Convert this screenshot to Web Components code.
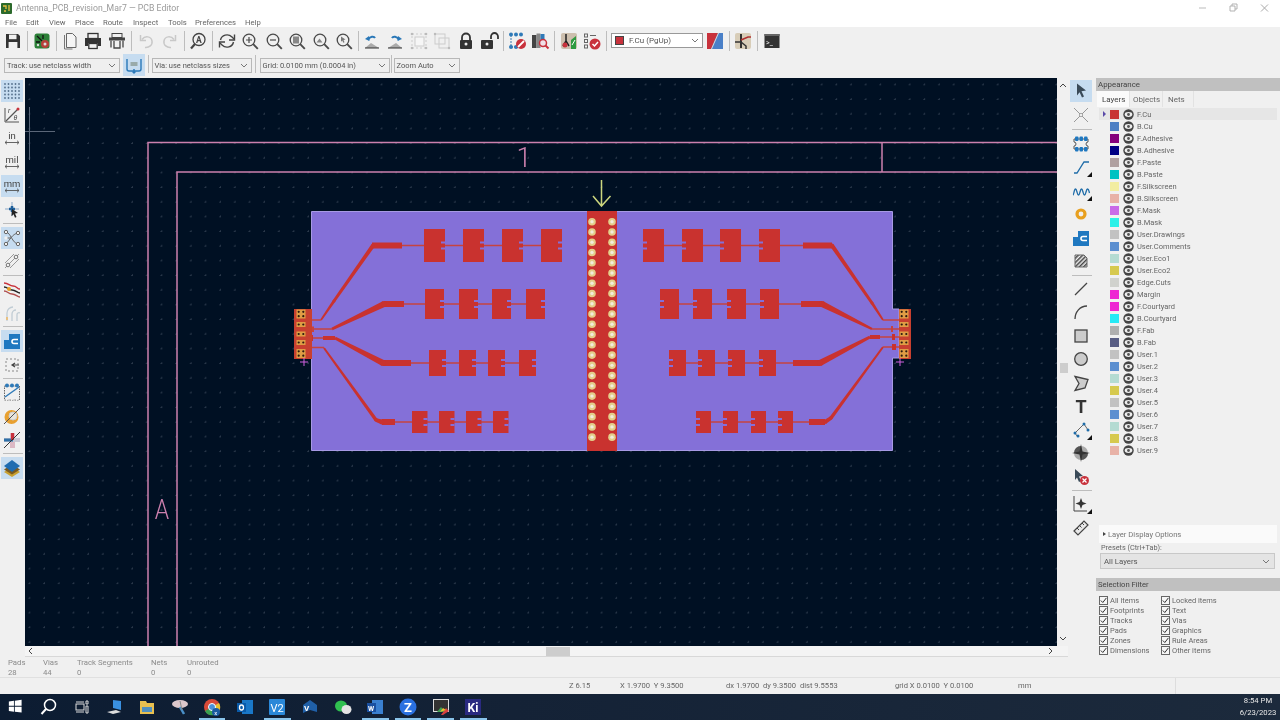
<!DOCTYPE html>
<html><head><meta charset="utf-8"><title>PCB Editor</title>
<style>
html,body{margin:0;padding:0;width:1280px;height:720px;overflow:hidden;background:#f0f0f0}
body{display:flex;flex-direction:column;font-family:Roboto,"Open Sans",sans-serif;font-size:7.6px;color:#555;filter:blur(.35px)}
.main{display:flex;height:579px}
</style></head>
<body>
<title-bar></title-bar>
<menu-bar></menu-bar>
<tool-strip style="height:27px;padding-left:1px;--w:23.5px;--h:26px">
<tool-btn icon="save"></tool-btn><tool-sep w="6"></tool-sep><tool-btn icon="pcb"></tool-btn><tool-sep w="4"></tool-sep>
<tool-btn icon="page"></tool-btn><tool-btn icon="print"></tool-btn><tool-btn icon="plot"></tool-btn><tool-sep w="6"></tool-sep>
<tool-btn icon="undo"></tool-btn><tool-btn icon="redo"></tool-btn><tool-sep w="5"></tool-sep>
<tool-btn icon="find"></tool-btn><tool-sep w="5"></tool-sep>
<tool-btn icon="refresh"></tool-btn><tool-btn icon="zin"></tool-btn><tool-btn icon="zout"></tool-btn><tool-btn icon="zfit"></tool-btn><tool-btn icon="zobj"></tool-btn><tool-btn icon="zsel"></tool-btn><tool-sep w="4"></tool-sep>
<tool-btn icon="rotl"></tool-btn><tool-btn icon="rotr"></tool-btn><tool-btn icon="group"></tool-btn><tool-btn icon="ungroup"></tool-btn><tool-btn icon="lock"></tool-btn><tool-btn icon="unlock"></tool-btn><tool-sep w="4"></tool-sep>
<tool-btn icon="netlist"></tool-btn><tool-btn icon="inspect"></tool-btn><tool-sep w="5"></tool-sep>
<tool-btn icon="script"></tool-btn><tool-btn icon="drc"></tool-btn><tool-sep w="5"></tool-sep>
<layer-box>F.Cu (PgUp)</layer-box>
<tool-btn icon="pair"></tool-btn><tool-sep w="5"></tool-sep><tool-btn icon="sch"></tool-btn><tool-sep w="5"></tool-sep><tool-btn icon="term"></tool-btn>
</tool-strip>
<tool-strip style="height:24px;padding-left:4px;--w:23px;--h:22px;align-items:flex-start">
<k-select style="width:116px">Track: use netclass width</k-select>
<tool-btn icon="autowidth" active style="margin-left:2.5px"></tool-btn>
<tool-sep w="6" short></tool-sep>
<k-select style="width:100px">Via: use netclass sizes</k-select>
<tool-sep w="8" short></tool-sep>
<k-select style="width:130px">Grid: 0.0100 mm (0.0004 in)</k-select>
<tool-sep w="4" short></tool-sep>
<k-select style="width:66px">Zoom Auto</k-select>
</tool-strip>
<div class="main">
<tool-strip vertical style="width:25px;padding-top:1px;--w:24px;--h:23.8px">
<tool-btn icon="grid" active></tool-btn><tool-btn icon="polar"></tool-btn><tool-btn icon="inch"></tool-btn><tool-btn icon="mil"></tool-btn><tool-btn icon="mm" active></tool-btn><tool-btn icon="cross"></tool-btn><tool-sep></tool-sep>
<tool-btn icon="rats" active></tool-btn><tool-btn icon="rats2"></tool-btn><tool-sep></tool-sep>
<tool-btn icon="hl"></tool-btn><tool-btn icon="viasoff"></tool-btn><tool-sep></tool-sep>
<tool-btn icon="zone" active></tool-btn><tool-btn icon="dash"></tool-btn><tool-sep></tool-sep>
<tool-btn icon="netinsp"></tool-btn><tool-btn icon="padfill"></tool-btn><tool-btn icon="crossred"></tool-btn><tool-sep></tool-sep>
<tool-btn icon="layers" active></tool-btn>
</tool-strip>
<board-view></board-view>
<tool-strip vertical style="width:26px;margin:0 1px;padding-top:1px;--w:24px;--h:23.5px">
<tool-btn icon="arrow" active style="--h:24px"></tool-btn><tool-btn icon="xcross" style="--h:24px"></tool-btn><tool-sep h="5"></tool-sep>
<tool-btn icon="fp"></tool-btn><tool-btn icon="route"></tool-btn><tool-btn icon="tune"></tool-btn><tool-btn icon="via"></tool-btn><tool-btn icon="zone"></tool-btn><tool-btn icon="hatch"></tool-btn><tool-sep></tool-sep>
<tool-btn icon="line"></tool-btn><tool-btn icon="arc"></tool-btn><tool-btn icon="rect"></tool-btn><tool-btn icon="circle"></tool-btn><tool-btn icon="poly"></tool-btn><tool-btn icon="text"></tool-btn><tool-btn icon="dim"></tool-btn><tool-btn icon="anchor"></tool-btn><tool-btn icon="del"></tool-btn><tool-sep></tool-sep>
<tool-btn icon="origin"></tool-btn><tool-btn icon="ruler"></tool-btn>
</tool-strip>
<side-dock></side-dock>
</div>
<msg-panel></msg-panel>
<status-bar></status-bar>
<task-bar></task-bar>
<script>
const G='#4a4a4a';
const mag=(inner='')=>`<circle cx="8" cy="8" r="5.800" fill="none" stroke="${G}" stroke-width="1.300"/><path d="M12.200 12.200l4.600 4.600" stroke="${G}" stroke-width="1.900"/>${inner}`;
const dots=(pts,c,r=1.500)=>pts.map(p=>`<circle cx="${p[0]}" cy="${p[1]}" r="${r}" fill="${c}"/>`).join('');
const gridDots=()=>{let s='';for(let y=2;y<17;y+=3.500)for(let x=2;x<17;x+=3.500)s+=`<circle cx="${x}" cy="${y}" r=".9" fill="#55708c"/>`;return s};
const corner='<path d="M20 14v5h-5z" fill="#111"/>';
const t=(x,y,s,size,c='#444',extra='')=>`<text x="${x}" y="${y}" font-family="Roboto,sans-serif" font-size="${size}" fill="${c}" ${extra}>${s}</text>`;
const unit=(s,size=8.500)=>t(9,10,s,size,'#444','text-anchor="middle"')+`<path d="M2 13.500h14M4 11.700l-2 1.800 2 1.800M14 11.700l2 1.800-2 1.800" fill="none" stroke="#555" stroke-width=".9"/>`;
const ICONS={
save:`<path d="M2 2h12l2 2v12H2z" fill="#333"/><rect x="5" y="2.600" width="7.500" height="4.600" fill="#f0f0f0"/><rect x="4.600" y="10" width="8.800" height="6" fill="#f0f0f0"/>`,
pcb:`<rect x="1.500" y="1.500" width="15" height="15" rx="2.500" fill="#2c8038"/><path d="M4 4l5 5M10 3v4M3 10h4" stroke="#111" stroke-width="1.300"/><circle cx="12" cy="12" r="4" fill="#b8403a"/><circle cx="12" cy="12" r="1.500" fill="#ddd"/><circle cx="5" cy="13" r="1.200" fill="#ddd"/>`,
page:`<path d="M3.500 3v14h8" fill="none" stroke="#777"/><path d="M5.500 1.500h6l3.500 3.500v10.500H5.500z" fill="#f5f5f5" stroke="#666"/>`,
print:`<rect x="4" y="1.500" width="10" height="5" fill="#f0f0f0" stroke="#333" stroke-width="1.300"/><path d="M1 6h16v8h-3v-3H4v3H1z" fill="#333"/><rect x="4.800" y="11.500" width="8.400" height="5" fill="#f0f0f0" stroke="#333" stroke-width="1.300"/>`,
plot:`<rect x="4" y="1.500" width="10" height="4" fill="none" stroke="#444"/><path d="M1 5.500h16v3H1z" fill="#444"/><path d="M3 8.500v7M15 8.500v7M6 9v7h6V9" fill="none" stroke="#444" stroke-width="1.300"/>`,
undo:`<path d="M5 7.500c3-4 9-3.500 10 1.500 .8 4-3 7-7 6.500" fill="none" stroke="#c8c8c8" stroke-width="1.500"/><path d="M3.500 3v5.500H9" fill="none" stroke="#c8c8c8" stroke-width="1.500"/>`,
redo:`<path d="M13 7.500c-3-4-9-3.500-10 1.500-.8 4 3 7 7 6.500" fill="none" stroke="#c8c8c8" stroke-width="1.500"/><path d="M14.500 3v5.500H9" fill="none" stroke="#c8c8c8" stroke-width="1.500"/>`,
find:`<circle cx="10" cy="7.500" r="6" fill="none" stroke="#444" stroke-width="1.300"/><path d="M6 12l-4 4.500" stroke="#444" stroke-width="2.200"/>${t(7,10.500,'A',8.500,'#444','font-weight="700"')}`,
refresh:`<path d="M2.500 8C3.500 3 10 1 14 5l2 2" fill="none" stroke="#444" stroke-width="1.400"/><path d="M16.500 2.500V8H11" fill="none" stroke="#444" stroke-width="1.400"/><path d="M15.500 10C14.500 15 8 17 4 13l-2-2" fill="none" stroke="#444" stroke-width="1.400"/><path d="M1.500 15.500V10H7" fill="none" stroke="#444" stroke-width="1.400"/>`,
zin:mag(`<path d="M5 8h6M8 5v6" stroke="${G}" stroke-width="1.200"/>`),
zout:mag(`<path d="M5 8h6" stroke="${G}" stroke-width="1.200"/>`),
zfit:mag(`<rect x="5" y="4.500" width="6" height="7" fill="#888"/>`),
zobj:mag(`<path d="M4.500 10.500l3-4 3 4z" fill="#888"/>`),
zsel:mag(`<path d="M6 4.500l4.500 3-2 .6 1 2.200-1.200.5-1-2.200-1.300 1.200z" fill="#777"/>`),
rotl:`<path d="M2 16l6-5 8 5z" fill="#aaa"/><path d="M2 16h14" stroke="#333"/><path d="M5 8C7 4 11 4 12 6" fill="none" stroke="#2a78b8" stroke-width="2"/><path d="M2 7l4-3 .5 5z" fill="#2a78b8"/>`,
rotr:`<path d="M16 16l-6-5-8 5z" fill="#aaa"/><path d="M2 16h14" stroke="#333"/><path d="M13 8C11 4 7 4 6 6" fill="none" stroke="#2a78b8" stroke-width="2"/><path d="M16 7l-4-3-.5 5z" fill="#2a78b8"/>`,
group:`<rect x="2" y="2" width="14" height="14" fill="none" stroke="#ccc" stroke-dasharray="2 2"/><rect x="5" y="5" width="9" height="9" fill="#f6f6f6" stroke="#ccc"/>${dots([[2,2],[16,2],[2,16],[16,16]],'#bbb',1.300)}`,
ungroup:`<rect x="2" y="2" width="10" height="10" fill="none" stroke="#ccc"/><rect x="6" y="6" width="10" height="10" fill="none" stroke="#ccc"/>${dots([[2,2],[16,16]],'#bbb',1.200)}`,
lock:`<path d="M5 8V5.500a4 4 0 0 1 8 0V8" fill="none" stroke="#333" stroke-width="1.800"/><rect x="3" y="8" width="12" height="9" rx="1" fill="#333"/><circle cx="9" cy="12" r="1.500" fill="#eee"/>`,
unlock:`<path d="M11 7V4.500a3.500 3.500 0 0 1 7 0V7" fill="none" stroke="#333" stroke-width="1.800"/><rect x="1" y="8" width="12" height="9" rx="1" fill="#333"/><circle cx="7" cy="12" r="1.500" fill="#eee"/>`,
netlist:`<path d="M3 3v12h12" fill="none" stroke="#3a78b0" stroke-dasharray="2 1"/>${dots([[3,2.500],[8,2.500],[13,2.500],[3,15],[8,15]],'#2f7ab8',2)}<circle cx="13" cy="12" r="5" fill="#c8323c"/><path d="M10 15l6-6" stroke="#fff" stroke-width="1.800"/>`,
inspect:`<rect x="1" y="3" width="4.500" height="13" fill="#444"/><rect x="5.500" y="1.500" width="4" height="14.500" fill="#888"/><rect x="9.500" y="2" width="4" height="10" fill="#2f7ab8"/><circle cx="12" cy="11" r="3.500" fill="#f0e0e8" stroke="#c8323c" stroke-width="1.500"/><path d="M14.500 13.500l3 3" stroke="#c8323c" stroke-width="2"/>`,
script:`<rect x="1" y="1" width="16" height="16" rx="2" fill="#cdbfae"/><path d="M11 17V8l5-4v13z" fill="#2e9a40"/><path d="M6 2v7l-3 5M6 9l3 5" fill="none" stroke="#222" stroke-width="1.500"/><circle cx="5" cy="13" r="2.500" fill="#c8323c"/><path d="M12 13l3-5" stroke="#fff"/>`,
drc:`<rect x="1.500" y="2" width="3" height="3" fill="none" stroke="#666"/><rect x="1.500" y="7.500" width="3" height="3" fill="none" stroke="#666"/><rect x="1.500" y="13" width="3" height="3" fill="none" stroke="#666"/><path d="M7 3.500h6" stroke="#666"/><circle cx="12" cy="12" r="5.500" fill="#c8323c"/><path d="M9.500 12l2 2 3.500-4" fill="none" stroke="#fff" stroke-width="1.500"/>`,
pair:`<path d="M1 1h16v16H1z" fill="#4a80c8"/><path d="M1 1h11L5 17H1z" fill="#c8323c"/><path d="M5 17l7-16h1L6 17z" fill="#ddd"/>`,
sch:`<rect x="1" y="1" width="16" height="16" rx="2" fill="#d8cdb8"/><path d="M7 2v14" stroke="#222" stroke-width="1.800"/><path d="M7 8l7-3h3" stroke="#b03030" stroke-width="1.600" fill="none"/><path d="M1 10h6M7 10l5 4v3" stroke="#333" stroke-width="1.500" fill="none"/>`,
term:`<rect x="1.500" y="2" width="15" height="14" fill="#333"/><rect x="1.500" y="2" width="15" height="2" fill="#666"/>${t(3,12.500,'&gt;_',7,'#eee')}`,
autowidth:`<path d="M3 3v10a2 2 0 0 0 2 2h10a2 2 0 0 0 2-2V3" fill="none" stroke="#2a78b8" stroke-width="1.400" transform="translate(-1 0)"/><rect x="5.500" y="6" width="7" height="4" fill="#9aa"/><path d="M9 13v4" stroke="#2a78b8" stroke-width="1.500"/><path d="M6.500 15.500l2.500 2.500 2.500-2.500z" fill="#2a78b8"/>`,
grid:gridDots(),
polar:`<path d="M2 2v14h14" fill="none" stroke="#555"/><path d="M3 15L15 3" stroke="#555" stroke-width="1.200"/><circle cx="15" cy="3" r="1.500" fill="#c8323c"/>${t(5,7,'r',7,'#444','font-style="italic"')}${t(10.500,13.500,'θ',7,'#444','font-style="italic"')}`,
inch:unit('in',9.500),mil:unit('mil',9.500),mm:unit('mm',9.500),
cross:`<path d="M9 1v14M2 8h14" stroke="#8aa8c8"/><path d="M6 8h6M9 5v6" stroke="#1f5f9a" stroke-width="2.500"/><path d="M9 8l6 4-3 .5 1.500 3.500-1.500.7-1.500-3.500-2 2z" fill="#222"/>`,
rats:`<path d="M3 3c5 1 6 11 12 12M3 15c4-4 6-10 12-11M3 9l5 0" fill="none" stroke="#666"/>${dots([[3,3],[15,15],[3,15],[15,4],[3,9]],'#f0f0f0',1.700)}<g fill="none" stroke="#666">${[[3,3],[15,15],[3,15],[15,4]].map(p=>`<circle cx="${p[0]}" cy="${p[1]}" r="1.700"/>`).join('')}</g>`,
rats2:`<path d="M2 16L16 2M2 11L11 2M7 16L16 7" stroke="#999"/><circle cx="5" cy="13" r="1.800" fill="#f0f0f0" stroke="#777"/><circle cx="13" cy="5" r="1.800" fill="#f0f0f0" stroke="#777"/>`,
hl:`<path d="M1 3c5 0 5 3 9 3s4 3 7 3" fill="none" stroke="#c8323c" stroke-width="1.400"/><path d="M1 7c4 0 4 3 8 3s5 3 8 3" fill="none" stroke="#222" stroke-width="1.400"/><path d="M1 11c4 0 4 3 8 3s5 3 8 3" fill="none" stroke="#b05050" stroke-width="1.400"/><circle cx="6" cy="9" r="2" fill="#e8a020"/>`,
viasoff:`<path d="M4 17v-8a6 6 0 0 1 6-6M9 17v-7a4 4 0 0 1 4-4M14 17v-6a2 2 0 0 1 3-2" fill="none" stroke="#c0ccd4" stroke-width="1.300"/><path d="M4 13v3" stroke="#e8c080" stroke-width="2"/>`,
zone:`<path d="M1 17V8h5V2h11v15z" fill="#1f78c0"/><path d="M15 7.500h-4a2 2 0 0 0 0 4h4" fill="none" stroke="#fff" stroke-width="1.600"/>`,
dash:`<rect x="3" y="3" width="12" height="12" fill="none" stroke="#888" stroke-dasharray="2 2"/><path d="M16 9h-6M12 7l-3 2 3 2" fill="none" stroke="#444" stroke-width="1.200"/>`,
netinsp:`<rect x="1.500" y="3" width="15" height="14" fill="none" stroke="#666" stroke-dasharray="1.500 1"/>${dots([[4,2.500],[9,2.500],[14,2.500]],'#2f7ab8',2)}${dots([[4,15],[9,15],[14,15]],'#f0f0f0',2)}<path d="M2 14L16 4" stroke="#2f7ab8" stroke-width="1.500"/>`,
padfill:`<circle cx="8.500" cy="10" r="7" fill="#e8a030"/><circle cx="10" cy="9" r="4" fill="#e8e4dc" stroke="#ccc"/><path d="M1 17L17 1" stroke="#555"/>`,
crossred:`<rect x="7" y="2" width="5" height="15" fill="#dcb8c4"/><rect x="1" y="7" width="16" height="4" fill="#c8c8d4"/><rect x="1" y="7.500" width="9" height="3" fill="#2f70a8"/><rect x="8" y="2" width="3" height="7" fill="#c8323c"/><path d="M1 17L17 1" stroke="#333"/>`,
layers:`<path d="M9 8l8 5-8 5-8-5z" fill="#c8a030"/><path d="M9 5.500l8 5-8 5-8-5z" fill="#7a5a20"/><path d="M9 1l8 6-8 6-8-6z" fill="#1f6cb0"/>`,
arrow:`<path d="M5 1.500l9 7-4.500 .8 2.500 5.200-2 1-2.400-5.200L5 13.500z" fill="#3a4a58"/>`,
xcross:`<path d="M2 2l14 14M16 2L2 16" stroke="#999"/><path d="M7 9l2-2 2 2-2 2z" fill="#eee" stroke="#aaa"/>`,
fp:`<path d="M2 4h14v3a2 2 0 0 0 0 4v3H2v-3a2 2 0 0 0 0-4z" fill="#f0f0f0" stroke="#555"/><g fill="#1f78c0">${[2,6.500,11].map(x=>`<rect x="${x+1}" y="1.500" width="3.500" height="4.500" rx="1"/><rect x="${x+1}" y="12" width="3.500" height="4.500" rx="1"/>`).join('')}</g>`,
route:`<path d="M2 15h3l7-11h5" fill="none" stroke="#1f6ca8" stroke-width="1.300"/>${corner}`,
tune:`<path d="M1 13c1 0 1-6 2.500-6S5 13 6.500 13 8 7 9.500 7 11 13 12.500 13 14 7 15.500 7 17 10 17.500 11" fill="none" stroke="#1f6ca8" stroke-width="1.300"/>${corner}`,
via:`<circle cx="9" cy="9" r="4" fill="none" stroke="#e8a020" stroke-width="3.200"/>`,
hatch:`<defs><pattern id="h" width="3" height="3" patternUnits="userSpaceOnUse" patternTransform="rotate(45)"><rect width="1.500" height="3" fill="#444"/></pattern></defs><path d="M3 3h9l3 3v9H3z" fill="url(#h)" stroke="#666"/>`,
line:`<path d="M3 15L15 3" stroke="#444" stroke-width="1.200"/>`,
arc:`<path d="M3 16C3 9 8 3 15 3" fill="none" stroke="#444" stroke-width="1.300"/>`,
rect:`<rect x="3" y="3" width="12" height="12" fill="#ccc" stroke="#444" stroke-width="1.300"/>`,
circle:`<circle cx="9" cy="9" r="6.300" fill="#ccc" stroke="#444" stroke-width="1.300"/>`,
poly:`<path d="M3 2.500l13 3-3 8.500-10 2.500 4-7z" fill="#ccc" stroke="#444" stroke-width="1.300"/>`,
text:t(9,15.500,'T',18,'#333','text-anchor="middle" font-weight="700"'),
dim:`<path d="M3 12L12 3l4 6" fill="none" stroke="#666"/><path d="M3 12l2 3" stroke="#666"/>${dots([[3,12],[12,3],[16,9],[6,15]],'#1f6ca8',1.500)}${corner}`,
anchor:`<circle cx="9" cy="9" r="7" fill="#aaa"/><path d="M9 9V2A7 7 0 0 0 2 9zM9 9v7a7 7 0 0 0 7-7z" fill="#555"/><path d="M9 0l1.500 7.500L18 9l-7.500 1.500L9 18l-1.500-7.500L0 9l7.500-1.500z" fill="#333"/>`,
del:`<path d="M3 1l8 7-4 .6 2 4.400-2 1-2-4.400-2 2.400z" fill="#3a4a58"/><circle cx="12.500" cy="12.500" r="4.500" fill="#c8323c"/><path d="M10.500 10.500l4 4M14.500 10.500l-4 4" stroke="#fff" stroke-width="1.200"/>`,
origin:`<path d="M2 1v15h13" fill="none" stroke="#444"/><path d="M9 3l1.500 4 4 1.500-4 1.500-1.500 4-1.500-4-4-1.500 4-1.500z" fill="#333"/>${corner}`,
ruler:`<path d="M2 12L12 2l4 4L6 16z" fill="#e8e8e8" stroke="#444" stroke-width="1.200"/><path d="M5 9l2 2M7.500 6.500l2 2M10 4l2 2" stroke="#444"/>`
};
const sh=(el,html)=>{el.attachShadow({mode:'open'}).innerHTML=html;};
class TitleBar extends HTMLElement{connectedCallback(){sh(this,`<style>:host{display:flex;align-items:center;height:15px;background:#fff;flex:none}
.t{color:#9a9a9a;margin-left:4px;font-size:8.700px;padding-top:1px}.ic{margin-left:1px;margin-top:2px}
.w{margin-left:auto;display:flex;width:90px}.w svg{width:30px;height:10px}</style>
<svg class="ic" width="11" height="11" viewBox="0 0 11 11"><rect width="11" height="11" rx="1" fill="#2c6a2c"/><path d="M2 3h3v3M8 2v6M3 8h2" stroke="#e8c040" stroke-width="1.300" fill="none"/></svg>
<span class="t">Antenna_PCB_revision_Mar7 — PCB Editor</span>
<div class="w"><svg viewBox="0 0 30 10"><path d="M9 5h7" stroke="#bbb"/></svg><svg viewBox="0 0 30 10"><path d="M10 3h5v5h-5zM12 3V1h5v5h-2" fill="none" stroke="#aaa" stroke-width=".9"/></svg><svg viewBox="0 0 30 10"><path d="M11 1.500l7 7M18 1.500l-7 7" stroke="#aaa"/></svg></div>`)}}
customElements.define('title-bar',TitleBar);
class MenuBar extends HTMLElement{connectedCallback(){
const M=[['File',21],['Edit',23],['View',26],['Place',28],['Route',30],['Inspect',35],['Tools',27],['Preferences',50],['Help',30]];
sh(this,`<style>:host{display:flex;align-items:center;box-sizing:border-box;height:12px;background:#fff;padding:2px 0 0 5px;font-size:7.700px;color:#666;flex:none}span{flex:none}</style>`+
M.map(m=>`<span style="width:${m[1]}px">${m[0]}</span>`).join(''))}}
customElements.define('menu-bar',MenuBar);
class ToolStrip extends HTMLElement{connectedCallback(){sh(this,`<style>:host{display:flex;align-items:center;background:#f0f0f0;box-sizing:border-box;flex:none}
:host([vertical]){flex-direction:column;align-items:stretch}</style><slot></slot>`)}}
customElements.define('tool-strip',ToolStrip);
class ToolBtn extends HTMLElement{connectedCallback(){sh(this,`<style>:host{display:flex;align-items:center;justify-content:center;flex:none;width:var(--w);height:var(--h)}
.b{display:flex;align-items:center;justify-content:center;width:22px;height:22px;flex:none}
:host([active]) .b{background:#c6dcf0}svg{width:18px;height:18px;overflow:visible}</style>
<div class="b"><svg viewBox="0 0 18 18">${ICONS[this.getAttribute('icon')]||''}</svg></div>`)}}
customElements.define('tool-btn',ToolBtn);
class ToolSep extends HTMLElement{connectedCallback(){const w=this.getAttribute('w'),h=this.getAttribute('h')||4;
sh(this,`<style>:host{display:flex;flex:none;align-items:center;justify-content:center}
.l{background:#bdbdbd}</style><div class="l"></div>`);
const l=this.shadowRoot.querySelector('.l');
if(w){this.style.width=w+'px';this.style.height=this.hasAttribute('short')?'20px':'100%';l.style.cssText='width:1px;height:'+(this.hasAttribute('short')?'18px':'20px');}
else{this.style.height=h+'px';l.style.cssText='height:1px;width:20px';}}}
customElements.define('tool-sep',ToolSep);
const chev=`<svg width="8" height="5" viewBox="0 0 8 5"><path d="M1 1l3 3 3-3" fill="none" stroke="#777"/></svg>`;
class KSelect extends HTMLElement{connectedCallback(){sh(this,`<style>:host{display:flex;align-items:center;justify-content:space-between;flex:none;box-sizing:border-box;height:15px;margin-top:4px;padding:0 3px 0 2px;background:#efefef;border:1px solid #b8b8b8;font-size:7.500px;color:#555;white-space:nowrap}</style><slot></slot>${chev}`)}}
customElements.define('k-select',KSelect);
class LayerBox extends HTMLElement{connectedCallback(){sh(this,`<style>:host{display:flex;align-items:center;flex:none;box-sizing:border-box;width:92px;height:15px;margin-left:2px;padding:0 3px;background:#fff;border:1px solid #999;font-size:8px;color:#555}
i{width:9px;height:9px;background:#c8323c;border:1px solid #444;box-sizing:border-box;margin-right:5px}svg{margin-left:auto}</style><i></i><slot></slot>${chev}`)}}
customElements.define('layer-box',LayerBox);

class BoardView extends HTMLElement{connectedCallback(){
const RED='#c9322f',TH='#c6433f',PUR='#8470d8';
const rect=(x,y,w,h,c)=>`<rect x="${x}" y="${y}" width="${w}" height="${h}" fill="${c}"/>`;
const ln=(x1,y1,x2,y2,w=1.500,c=TH)=>`<path d="M${x1} ${y1}L${x2} ${y2}" stroke="${c}" stroke-width="${w}"/>`;
const taper=(x1,y1,w1,x2,y2,w2)=>{const dx=x2-x1,dy=y2-y1,l=Math.hypot(dx,dy),nx=-dy/l/2,ny=dx/l/2;
return `<polygon fill="${RED}" points="${x1+nx*w1},${y1+ny*w1} ${x2+nx*w2},${y2+ny*w2} ${x2-nx*w2},${y2-ny*w2} ${x1-nx*w1},${y1-ny*w1}"/><circle cx="${x1}" cy="${y1}" r="${w1/2}" fill="${RED}"/>`};
const patches=(xs,w,yc,h,side)=>{let s='';const a=xs[0],b=xs[xs.length-1]+w;
s+=ln(a,yc,b,yc);
xs.forEach(x=>{s+=rect(x,yc-h/2,w,h,RED);const nx=side<0?x+w-4:x;s+=rect(nx,yc-4,4,2,PUR)+rect(nx,yc+2,4,2,PUR);});return s};
const feed=(thinA,thinB,yc,tA,tB)=>ln(thinA,yc,thinB,yc)+ln(tA,yc,tB,yc,6,RED);
let b='';
b+=`<path d="M311.500 211.500H892.500V309H899V358H892.500V450.500H311.500Z" fill="${PUR}" stroke="#a79ae4" stroke-width="1"/>`;
b+=rect(587,211,30,240,RED);
for(let i=0;i<22;i++){const y=221.700+i*10.260;for(const x of[592,612])b+=`<circle cx="${x}" cy="${y}" r="3.800" fill="#e3cf8a"/><circle cx="${x}" cy="${y}" r="1.700" fill="#f2ecdc"/>`;}
b+=patches([424,463,502,541],21,245.500,33,-1)+feed(402,424,245.500,372,402);
b+=taper(373,245.500,4,334,301,3)+taper(334,301,3,321,320,1.800);b+=ln(321,320,297,320);
b+=patches([425,459,492,526],19,304,30,-1)+feed(404,425,304,384,404);
b+=taper(384,304,6,332,329,2.500)+ln(332,329,297,329);b+=ln(313,326.500,313,332,2);
b+=patches([429,459,488,519],17,363,26,-1)+feed(411,429,363,383,411);
b+=taper(383,363,6,335,338,3)+ln(335,338,323,338,4,RED)+ln(323,338,297,338)+rect(310,335,3,6,RED);
b+=patches([412,439,466,493],15.500,422,22,-1)+feed(395,412,422,382,395);
b+=taper(382,422,5,376,420,3.500)+taper(376,420,3.500,324,348,2)+ln(324,347.500,297,347.500)+rect(307,344.500,5,6,RED);
b+=patches([643,682,720,759],21,245.500,33,1)+feed(780,803,245.500,803,832);
b+=taper(832,245.500,4,872,303,3)+taper(872,303,3,883,320,1.800)+ln(883,320,899,320);
b+=patches([660,693,727,760],19,304,30,1)+feed(779,801,304,801,822);
b+=taper(822,304,6,872,329,2.500)+ln(872,329,899,329)+ln(892,326,892,332,2);
b+=patches([669,698,728,759],17,363,26,1)+feed(776,793,363,793,820);
b+=taper(820,363,6,870,337,3)+ln(870,337,880,337,4,RED)+ln(880,337,899,337)+rect(892,334,3,6,RED);
b+=patches([696,723,751,778],15,422,22,1)+feed(793,809,422,809,825);
b+=taper(825,422,4,831,418,3.500)+taper(831,418,3.500,883,347,2)+ln(883,347,899,347)+rect(892,344,4,6,RED);
const conn=(x0,w,cx,plusx)=>{let s=rect(x0,309,w,50,'#c8402f');
[314,353.500].forEach(y=>{s+=rect(cx-4.500,y-4.500,9,9,'#df9d45')+dots([[cx-2.300,y-2.200],[cx+2.300,y-2.200],[cx-2.300,y+2.200],[cx+2.300,y+2.200]],'#2a1a10',1.100)});
[324.500,334,342.500].forEach(y=>{s+=rect(cx-4.500,y-2.500,9,5,'#df9d45')+dots([[cx-2.300,y],[cx+2.300,y]],'#2a1a10',1.100)});
s+=`<path d="M${plusx-4} 362h8M${plusx} 358v8" stroke="#d060e0" stroke-width="1"/>`;return s};
b+=conn(294,18,301,304)+conn(899,12,904,900);
const pink='#cc80ae';
const frame=`<g stroke="${pink}" stroke-width="1.500" fill="none"><path d="M148 646V142.500H1057M177 646V172H1057M882 142.500V172"/></g>
<text x="524" y="167" text-anchor="middle" font-family="Roboto,sans-serif" font-weight="300" font-size="27" fill="${pink}">1</text>
<text x="162" y="519" text-anchor="middle" font-family="Roboto,sans-serif" font-weight="300" font-size="28" fill="${pink}" transform="translate(162 0) scale(.82 1) translate(-162 0)">A</text>`;
sh(this,`<style>:host{display:grid;grid-template-columns:1032px 11px;grid-template-rows:568px 11px;flex:none}
svg.c{display:block;grid-column:1;grid-row:1;width:1032px;height:568px;background:#001023}
.v{background:#f0f0f0;display:flex;flex-direction:column;justify-content:space-between;align-items:center;position:relative;padding:5px 0;box-sizing:border-box}
.vt{position:absolute;left:3px;top:285px;width:8px;height:10px;background:#cdcdcd}
.h{background:#f4f4f4;display:flex;justify-content:space-between;align-items:center;position:relative;padding:0 3px;box-sizing:border-box;border-bottom:1px solid #d8d8d8;grid-column:1/3}
.ht{position:absolute;left:521px;top:1px;width:24px;height:9px;background:#cdcdcd}</style>
<svg class="c" viewBox="25 78 1032 568" xmlns="http://www.w3.org/2000/svg">
<defs><pattern id="g" x="29.300" y="201.700" width="14.670" height="14.670" patternUnits="userSpaceOnUse"><rect x="-.5" y="-.5" width="1.100" height="1.100" fill="#727d8e"/><rect x="14.170" y="-.5" width="1" height="1.100" fill="#727d8e"/><rect x="-.5" y="14.170" width="1.100" height="1" fill="#727d8e"/></pattern></defs>
<rect x="25" y="78" width="1032" height="568" fill="url(#g)"/>
<path d="M25 131.500H55M29.500 107V160" stroke="#5a6678" stroke-width="1"/>
${frame}${b}
<path d="M601.500 180V206M593 196l8.500 10 9-10" fill="none" stroke="#ccd67e" stroke-width="1.500"/>
</svg>
<div class="v"><svg width="8" height="5" viewBox="0 0 8 5"><path d="M1 4l3-3 3 3" fill="none" stroke="#444"/></svg><div class="vt"></div><svg width="8" height="5" viewBox="0 0 8 5"><path d="M1 1l3 3 3-3" fill="none" stroke="#444"/></svg></div>
<div class="h"><svg width="5" height="8" viewBox="0 0 5 8"><path d="M4 1L1 4l3 3" fill="none" stroke="#444"/></svg><div class="ht"></div><svg width="5" height="8" viewBox="0 0 5 8" style="margin-right:12px"><path d="M1 1l3 3-3 3" fill="none" stroke="#444"/></svg></div>`)}}
customElements.define('board-view',BoardView);

const LAYERS=[['F.Cu','#c83434'],['B.Cu','#4d7fc4'],['F.Adhesive','#84007c'],['B.Adhesive','#000084'],['F.Paste','#b0a0a0'],['B.Paste','#00c2c2'],['F.Silkscreen','#f2eda1'],['B.Silkscreen','#e8b2a7'],['F.Mask','#c96ae8'],['B.Mask','#2bf0e8'],['User.Drawings','#c2c2c2'],['User.Comments','#5c8fd0'],['User.Eco1','#b4dbd2'],['User.Eco2','#d6c94e'],['Edge.Cuts','#d0d2cd'],['Margin','#ee26d2'],['F.Courtyard','#ee26d2'],['B.Courtyard','#26e9f5'],['F.Fab','#afafaf'],['B.Fab','#585d84'],['User.1','#c2c2c2'],['User.2','#5c8fd0'],['User.3','#b4dbd2'],['User.4','#d6c94e'],['User.5','#c2c2c2'],['User.6','#5c8fd0'],['User.7','#b4dbd2'],['User.8','#d6c94e'],['User.9','#e8b2a7']];
const eye=`<svg width="11" height="11" viewBox="0 0 11 11"><circle cx="5.500" cy="5.500" r="5.200" fill="#444"/><ellipse cx="5.500" cy="5.500" rx="3.800" ry="2.400" fill="#eee"/><circle cx="5.500" cy="5.500" r="1.400" fill="#555"/></svg>`;
class SideDock extends HTMLElement{connectedCallback(){
const L=['All items','Footprints','Tracks','Pads','Zones','Dimensions'],R=['Locked items','Text','Vias','Graphics','Rule Areas','Other items'];
const ck=s=>`<label><svg width="9" height="9" viewBox="0 0 9 9"><rect x=".5" y=".5" width="8" height="8" fill="#f6f6f6" stroke="#666"/><path d="M1.800 4.500l2 2 3.600-4.600" fill="none" stroke="#333"/></svg>${s}</label>`;
sh(this,`<style>:host{display:flex;flex-direction:column;width:184px;flex:none;font-size:7.500px;color:#555;box-sizing:border-box}
.hd{height:13px;background:#c0c0c0;display:flex;align-items:center;padding-left:2px;font-size:7.900px;color:#444;flex:none}
.tabs{display:flex;height:16px;flex:none;margin-left:1px}.tabs span{box-sizing:border-box;display:flex;align-items:center;border-right:1px solid #e2e2e2;font-size:8px;color:#666}
.tabs span.a{background:#fafafa;color:#444}
.list{height:418px;box-sizing:border-box;flex:none;padding:1px 3px 0 3px}
.row{display:flex;align-items:center;height:12px;padding-left:11px;font-size:7.500px;color:#666}.row.s{background:#e6e6e6;position:relative}
.row i{width:9px;height:9px;margin-right:4px;flex:none}.row svg{margin-right:3px;flex:none}
.tri{position:absolute;left:4px;top:3px;width:0;height:0;border-left:3.500px solid #5a4aa8;border-top:3px solid transparent;border-bottom:3px solid transparent}
.opt{height:18px;background:#fafafa;display:flex;align-items:center;padding-left:4px;margin:0 3px;flex:none;color:#777;font-size:7.650px}
.opt:before{content:"";border-left:3px solid #444;border-top:2.500px solid transparent;border-bottom:2.500px solid transparent;margin-right:2px}
.pre{height:35px;flex:none;padding:0 4px 0 5px;font-size:7.300px;color:#666;box-sizing:border-box}
.pre .dd{display:flex;justify-content:space-between;align-items:center;height:16px;margin-left:-1px;padding:0 4px 0 3px;width:175px;box-sizing:border-box;background:#e4e4e4;border:1px solid #c8c8c8;color:#555;font-size:7.800px}
.pre p{margin:0;height:10px;line-height:10px}
.sf{display:flex;padding:4px 0 0 3px;background:#f0f0f0;flex:1}.col{display:flex;flex-direction:column;width:62px}
label{display:flex;align-items:center;height:10px;gap:2px;color:#666;font-size:7.500px;white-space:nowrap}</style>
<div class="hd">Appearance</div>
<div class="tabs"><span class="a" style="width:33px;padding-left:5px">Layers</span><span style="width:33px;padding-left:3px">Objects</span><span style="width:31px;padding-left:5px">Nets</span></div>
<div class="list">${LAYERS.map((l,i)=>`<div class="row ${i?'':'s'}">${i?'':'<b class="tri"></b>'}<i style="background:${l[1]}"></i>${eye}<span>${l[0]}</span></div>`).join('')}</div>
<div class="opt">Layer Display Options</div>
<div class="pre"><p>Presets (Ctrl+Tab):</p><div class="dd">All Layers${chev}</div></div>
<div class="hd" style="font-size:7.700px">Selection Filter</div>
<div class="sf"><div class="col">${L.map(ck).join('')}</div><div class="col">${R.map(ck).join('')}</div></div>`)}}
customElements.define('side-dock',SideDock);
class MsgPanel extends HTMLElement{connectedCallback(){
const C=[['Pads','28',35],['Vias','44',34],['Track Segments','0',74],['Nets','0',36],['Unrouted','0',60]];
sh(this,`<style>:host{display:flex;height:21px;box-sizing:border-box;padding:1px 0 0 8px;background:#f0f0f0;border-bottom:1px solid #e0e0e0;font-size:7.750px;color:#8a8a8a;flex:none}
div{display:flex;flex-direction:column;line-height:10px}</style>`+C.map(c=>`<div style="width:${c[2]}px"><span>${c[0]}</span><span>${c[1]}</span></div>`).join(''))}}
customElements.define('msg-panel',MsgPanel);
class StatusBar extends HTMLElement{connectedCallback(){
const C=[['Z 6.15',51],['X 1.9700  Y 9.3500',106],['dx 1.9700  dy 9.3500  dist 9.5553',169],['grid X 0.0100  Y 0.0100',123],['mm',157]];
sh(this,`<style>:host{display:flex;align-items:center;box-sizing:border-box;height:16px;padding:0 0 1px 569px;background:#f0f0f0;font-size:7.600px;color:#666;flex:none;white-space:pre}
span{flex:none}.e{border-left:1px solid #ddd;height:16px;flex:none}</style>`+C.map(c=>`<span style="width:${c[1]}px">${c[0]}</span>`).join('')+`<div class="e"></div>`)}}
customElements.define('status-bar',StatusBar);
const TASK=[
`<path d="M1 3l6-1v6H1zM8 2l8-1v7H8zM1 9h6v6l-6-1zM8 9h8v7l-8-1z" fill="#fff" transform="translate(1 1) scale(.85)"/>`,
`<circle cx="10" cy="7" r="5.500" fill="none" stroke="#fff" stroke-width="1.500"/><path d="M6 11l-4.500 5" stroke="#fff" stroke-width="2"/>`,
`<path d="M3 4h8M3 14h8M13 3h2v3h-2zM13 8h2v7h-2z" stroke="#ddd" fill="none"/><rect x="3" y="6" width="8" height="6" fill="none" stroke="#ddd"/>`,
`<path d="M8 2l8 1v9l-8-2z" fill="#3a90e0"/><path d="M2 14l9-2 5 2-8 2z" fill="#ddd"/>`,
`<path d="M2 3h6l1 2h7v11H2z" fill="#e8c050"/><rect x="4" y="9" width="10" height="5" fill="#5090c0"/>`,
`<ellipse cx="9" cy="6" rx="8" ry="4" fill="#dcc8cc"/><path d="M9 9l4 7" stroke="#4a90c8" stroke-width="2.500"/><path d="M9 3l2 9" stroke="#888"/>`,
`<circle cx="9" cy="9" r="8" fill="#d84a38"/><path d="M9 9L2 13a8 8 0 0 0 9 4z" fill="#3aa050"/><path d="M9 9l7-4a8 8 0 0 1-5 12z" fill="#e8c030"/><circle cx="9" cy="9" r="3.500" fill="#4a90d8" stroke="#fff"/><circle cx="13" cy="14" r="4" fill="#1a5aa0"/>${t(11.300,16.500,'x',6,'#fff')}`,
`<rect x="6" y="2" width="11" height="14" fill="#1a78c8"/><rect x="1" y="5" width="9" height="9" fill="#0a5aa8"/><ellipse cx="5.500" cy="9.500" rx="2" ry="2.500" fill="none" stroke="#fff" stroke-width="1.300"/>`,
`<rect x="1" y="1" width="16" height="16" rx="1" fill="#2a88d8"/>${t(9,13.500,'V2',11,'#fff','text-anchor="middle"')}`,
`<path d="M2 7l7-5 7 5v7l-7-2-7 3z" fill="#2060a8"/>${t(3,13,'V',8,'#fff','font-weight="700"')}`,
`<ellipse cx="7" cy="8" rx="6" ry="5.500" fill="#30c050"/><ellipse cx="12.500" cy="11.500" rx="5" ry="4.500" fill="#e4e4e4"/>`,
`<rect x="6" y="2" width="11" height="14" fill="#3a80d0"/><rect x="1" y="5" width="9" height="9" fill="#1a50a0"/>${t(2,12.500,'W',7,'#fff','font-weight="700"')}`,
`<circle cx="9" cy="9" r="8.500" fill="#2a70e0"/>${t(9,14,'Z',13,'#fff','text-anchor="middle" font-weight="700"')}`,
`<rect x="1.500" y="1.500" width="15" height="12" fill="#333" stroke="#ddd"/><path d="M5 14l4-5 4 5z" fill="#40a050"/><path d="M9 17l5-7 3 3-6 4z" fill="#d84040"/><path d="M8 14l3-4 3 2z" fill="#e8c030"/>`,
`<rect x="1" y="1" width="16" height="16" fill="#2a2a80"/>${t(9,14,'Ki',12,'#fff','text-anchor="middle" font-weight="700"')}`
];
class TaskBar extends HTMLElement{connectedCallback(){
const on=[6,8,11,12,13,14];
sh(this,`<style>:host{display:flex;height:26px;background:linear-gradient(90deg,#0c1c32,#142236 40%,#1c2a3c);flex:none;color:#e8e8e8;font-size:7.700px}
.b{width:32.650px;height:26px;display:flex;align-items:center;justify-content:center;position:relative;flex:none}
.b:first-child{margin-left:-1px}
.b.on:after{content:"";position:absolute;left:3px;right:3px;bottom:0;height:2px;background:#8ac4ea}
svg{width:18px;height:18px}.clk{margin-left:auto;margin-right:3px;width:38px;white-space:nowrap;text-align:center;line-height:12px;padding-top:1px}</style>`+
TASK.map((s,i)=>`<div class="b ${on.includes(i)?'on':''}"><svg viewBox="0 0 18 18">${s}</svg></div>`).join('')+`<div class="clk">8:54 PM<br>6/23/2023</div>`)}}
customElements.define('task-bar',TaskBar);
</script>
</body></html>
